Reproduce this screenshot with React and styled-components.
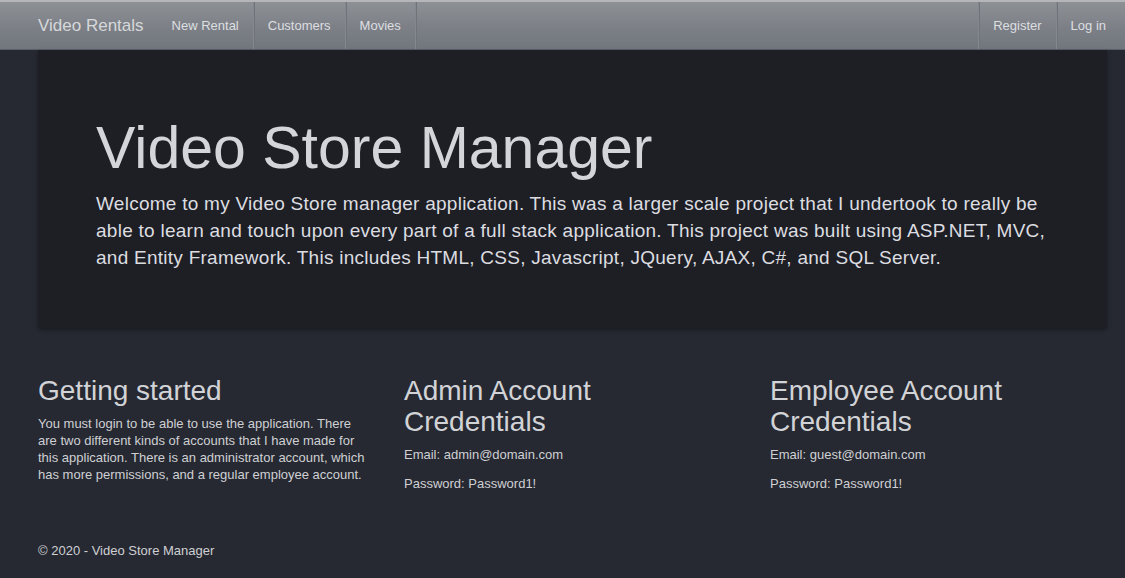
import styled, { createGlobalStyle } from "styled-components";

const GlobalStyle = createGlobalStyle`
  html, body {
    margin: 0;
    padding: 0;
    background: #262932;
  }
  body {
    font-family: "Liberation Sans", Arial, sans-serif;
    color: #d9dadc;
  }
`;

export default function App() {
  return (
    <>
      <GlobalStyle />
      <NavBar>
        <NavSide>
          <Brand>Video Rentals</Brand>
          <NavLink>New Rental</NavLink>
          <NavLink divider>Customers</NavLink>
          <NavLink divider>Movies</NavLink>
          <Divider />
        </NavSide>
        <NavSide>
          <Divider />
          <NavLink>Register</NavLink>
          <NavLink divider>Log in</NavLink>
        </NavSide>
      </NavBar>

      <Container>
        <Jumbotron>
          <Title>Video Store Manager</Title>
          <Lead>
            Welcome to my Video Store manager application. This was a larger scale project that I
            undertook to really be able to learn and touch upon every part of a full stack
            application. This project was built using ASP.NET, MVC, and Entity Framework. This
            includes HTML, CSS, Javascript, JQuery, AJAX, C#, and SQL Server.
          </Lead>
        </Jumbotron>

        <Row>
          <Column>
            <ColTitle>Getting started</ColTitle>
            <Body>
              You must login to be able to use the application. There are two different kinds of
              accounts that I have made for this application. There is an administrator account,
              which has more permissions, and a regular employee account.
            </Body>
          </Column>
          <Column>
            <ColTitle>Admin Account Credentials</ColTitle>
            <Body>Email: admin@domain.com</Body>
            <Body>Password: Password1!</Body>
          </Column>
          <Column>
            <ColTitle>Employee Account Credentials</ColTitle>
            <Body>Email: guest@domain.com</Body>
            <Body>Password: Password1!</Body>
          </Column>
        </Row>

        <Footer>© 2020 - Video Store Manager</Footer>
      </Container>
    </>
  );
}

const NavBar = styled.nav`
  height: 50px;
  box-sizing: border-box;
  border-top: 2px solid #b4b6ba;
  border-bottom: 1px solid #5c6068;
  background: linear-gradient(to bottom, #8d9095 0%, #7c8086 55%, #71757d 100%);
  display: flex;
  justify-content: space-between;
  align-items: stretch;
  padding: 0 5px 0 38px;
`;

const NavSide = styled.div`
  display: flex;
  align-items: stretch;
`;

const Brand = styled.span`
  display: flex;
  align-items: center;
  font-size: 17px;
  color: #d6d8db;
  margin-right: 14px;
`;

const NavLink = styled.span`
  display: flex;
  align-items: center;
  padding: 0 14px;
  font-size: 13px;
  color: #dcdee1;
  border-left: ${(props) => (props.divider ? "1px solid #84878d" : "none")};
  box-shadow: ${(props) => (props.divider ? "inset 1px 0 0 #6f737a" : "none")};
`;

const Divider = styled.span`
  width: 1px;
  background: #84878d;
  box-shadow: 1px 0 0 #6f737a;
`;

const Container = styled.main`
  padding: 0 18px 0 38px;
`;

const Jumbotron = styled.section`
  background: #1e1f24;
  border-radius: 0 0 4px 4px;
  box-shadow: 0 2px 4px rgba(0, 0, 0, 0.35);
  padding: 66px 52px 58px 58px;
  height: 278px;
  box-sizing: border-box;
`;

const Title = styled.h1`
  margin: 0 0 10px;
  font-weight: 400;
  font-size: 59px;
  line-height: 64px;
  color: #d4d5d8;
`;

const Lead = styled.p`
  margin: 0;
  font-size: 19px;
  letter-spacing: 0.26px;
  line-height: 27px;
  color: #dcdde0;
`;

const Row = styled.div`
  display: grid;
  grid-template-columns: repeat(3, 336px);
  column-gap: 30px;
  margin-top: 47px;
  height: 168px;
`;

const Column = styled.div`
  display: flex;
  flex-direction: column;
`;

const ColTitle = styled.h2`
  margin: 0 0 9px;
  max-width: 320px;
  font-weight: 400;
  font-size: 28px;
  line-height: 31px;
  color: #d2d3d6;
`;

const Body = styled.p`
  margin: 0 0 12px;
  max-width: 332px;
  font-size: 13px;
  line-height: 17px;
  color: #cfd0d3;
`;

const Footer = styled.footer`
  font-size: 13px;
  color: #cfd0d3;
`;
